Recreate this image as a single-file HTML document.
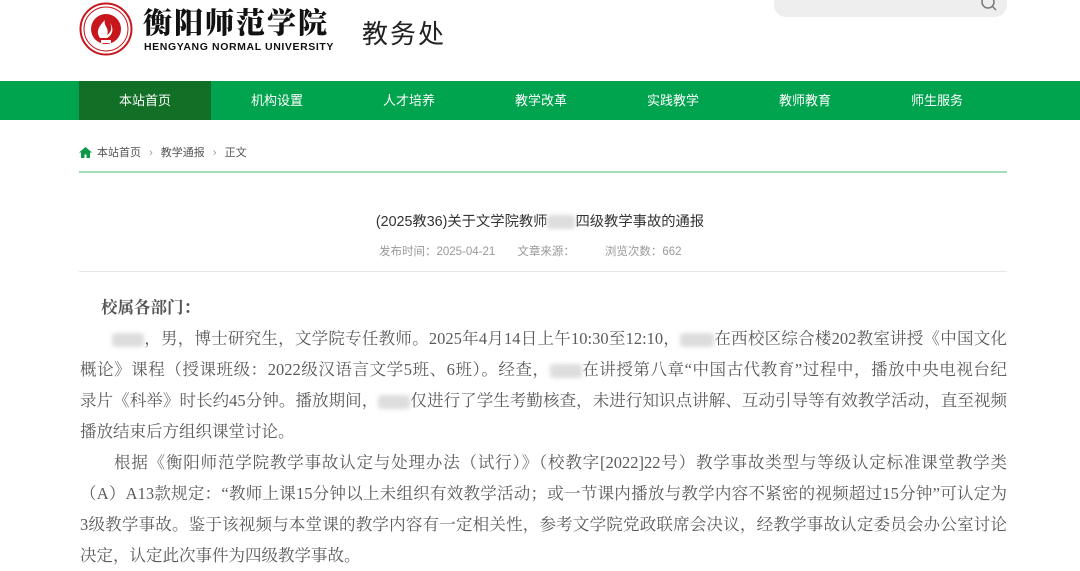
<!DOCTYPE html>
<html><head><meta charset="utf-8"><style>
*{margin:0;padding:0;box-sizing:border-box}
body{width:1080px;height:570px;overflow:hidden;background:#fff;font-family:"Liberation Sans","Noto Sans CJK SC",sans-serif;position:relative}
.abs{position:absolute}
.nav{top:81px;left:0;width:1080px;height:39px;background:#00a34e}
.nav div{position:absolute;top:0;height:39px;width:132px;line-height:39px;text-align:center;color:#fff;font-size:13px}
.bl{display:inline-block;background:#ddd;filter:blur(2px);height:14px;vertical-align:middle;border-radius:3px}
.ln{position:absolute;left:80px;width:927px;font-family:"Liberation Serif","Noto Serif CJK SC",serif;font-size:16.5px;color:#5a5a5a;text-align:justify;text-align-last:justify;white-space:nowrap;height:31px;line-height:31px}
</style></head><body>
<svg class="abs" style="left:79px;top:2px" width="54" height="54" viewBox="0 0 54 54"><circle cx="27" cy="27" r="25.5" fill="#fff" stroke="#c8161d" stroke-width="2"/><circle cx="27" cy="27" r="22" fill="none" stroke="#c8161d" stroke-width="1"/><circle cx="27" cy="27" r="15" fill="#c8161d"/><path d="M21 36c-5-7 0-13 5-18-2 6 5 8 2 15 5-3 5-8 3-12 4 5 3 12-3 15z" fill="#fff"/><rect x="22" y="38" width="10" height="3" fill="#fff"/></svg>
<div class="abs" style="left:143px;top:4px;font-family:'Noto Serif CJK SC',serif;font-weight:900;font-size:29px;letter-spacing:2px;color:#111;line-height:36px">衡阳师范学院</div>
<div class="abs" style="left:144px;top:41px;font-size:10.5px;font-weight:bold;color:#111;letter-spacing:0.6px">HENGYANG NORMAL UNIVERSITY</div>
<div class="abs" style="left:362px;top:14px;font-size:26px;color:#222;letter-spacing:2px">教务处</div>
<div class="abs" style="left:774px;top:-20px;width:233px;height:37px;background:#eee;border-radius:12px"></div>
<svg class="abs" style="left:980px;top:0" width="20" height="12"><circle cx="8" cy="2" r="6" fill="none" stroke="#777" stroke-width="1.5"/><line x1="12" y1="6" x2="16" y2="10" stroke="#777" stroke-width="1.5"/></svg>
<div class="abs nav">
<div style="left:79px;background:#127026">本站首页</div><div style="left:211px">机构设置</div><div style="left:343px">人才培养</div><div style="left:475px">教学改革</div><div style="left:607px">实践教学</div><div style="left:739px">教师教育</div><div style="left:871px">师生服务</div>
</div>
<svg class="abs" style="left:79px;top:147px" width="13" height="11" viewBox="0 0 13 11"><path d="M6.5 0L0 5.5h2V11h3.5V7.5h2V11H11V5.5h2z" fill="#0d9a48"/></svg>
<div class="abs" style="left:97px;top:145px;font-size:11px;color:#555;line-height:16px">本站首页 <span style="color:#999;margin:0 5px">›</span> 教学通报 <span style="color:#999;margin:0 5px">›</span> 正文</div>
<div class="abs" style="left:79px;top:171px;width:928px;height:2px;background:#a3dcb9"></div>
<div class="abs" style="left:0;width:1080px;top:210px;text-align:center;font-size:14.3px;color:#333">(2025教36)关于文学院教师<span class="bl" style="width:28px"></span>四级教学事故的通报</div>
<div class="abs" style="left:379px;top:243px;font-size:11.5px;color:#999;white-space:nowrap">发布时间：2025-04-21<span style="margin-left:22px">文章来源：</span><span style="margin-left:30px">浏览次数：662</span></div>
<div class="abs" style="left:79px;top:271px;width:928px;height:1px;background:#e8e8e8"></div>
<div class="abs" style="left:101px;top:292px;font-family:'Liberation Serif','Noto Serif CJK SC',serif;font-size:16.5px;font-weight:bold;color:#555;line-height:31px">校属各部门：</div>
<div class="ln" style="top:323px"><span class="bl" style="width:32px;margin-left:32px"></span>，男，博士研究生，文学院专任教师。2025年4月14日上午10:30至12:10，<span class="bl" style="width:34px"></span>在西校区综合楼202教室讲授《中国文化</div>
<div class="ln" style="top:354px">概论》课程（授课班级：2022级汉语言文学5班、6班）。经查，<span class="bl" style="width:32px"></span>在讲授第八章“中国古代教育”过程中，播放中央电视台纪</div>
<div class="ln" style="top:385px">录片《科举》时长约45分钟。播放期间，<span class="bl" style="width:32px"></span>仅进行了学生考勤核查，未进行知识点讲解、互动引导等有效教学活动，直至视频</div>
<div class="ln" style="top:416px;text-align-last:left">播放结束后方组织课堂讨论。</div>
<div class="ln" style="top:447px"><span style="margin-left:34px"></span>根据《衡阳师范学院教学事故认定与处理办法（试行）》（校教字[2022]22号）教学事故类型与等级认定标准课堂教学类</div>
<div class="ln" style="top:478px">（A）A13款规定：“教师上课15分钟以上未组织有效教学活动；或一节课内播放与教学内容不紧密的视频超过15分钟”可认定为</div>
<div class="ln" style="top:509px">3级教学事故。鉴于该视频与本堂课的教学内容有一定相关性，参考文学院党政联席会决议，经教学事故认定委员会办公室讨论</div>
<div class="ln" style="top:540px;text-align-last:left">决定，认定此次事件为四级教学事故。</div>
</body></html>
